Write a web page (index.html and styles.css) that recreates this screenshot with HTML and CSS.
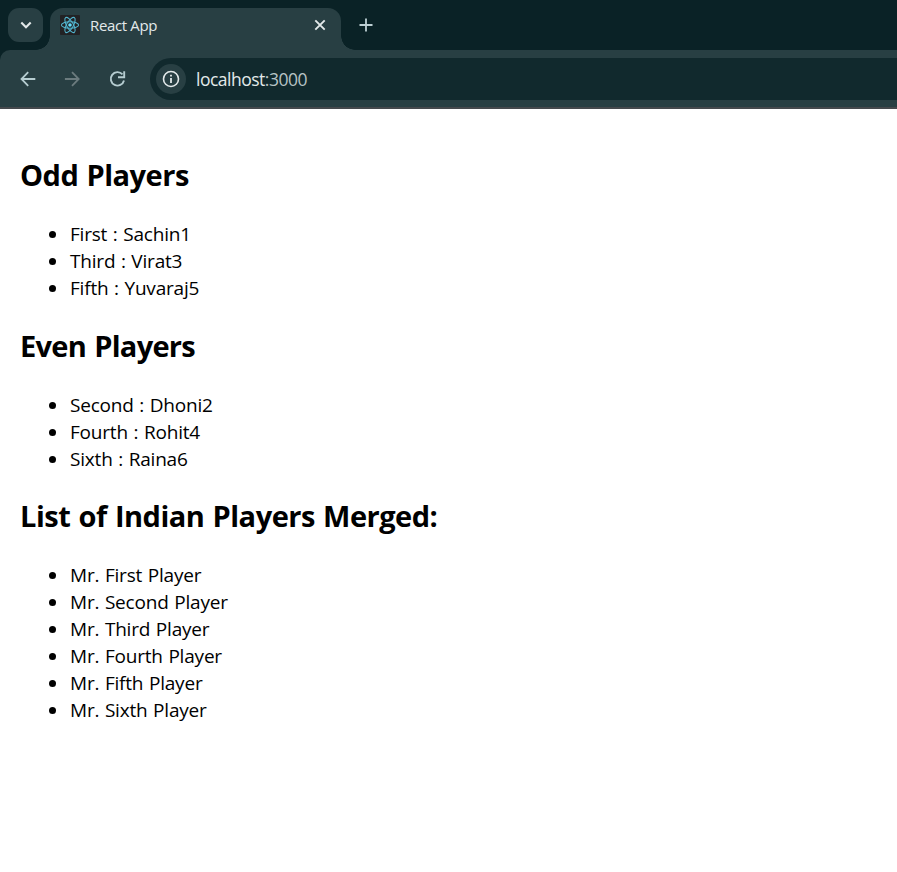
FILE: index.html
```html
<!DOCTYPE html>
<html lang="en">
<head>
<meta charset="utf-8">
<title>React App</title>
<link rel="stylesheet" href="styles.css">
</head>
<body>
<header class="browser">
  <div class="tab-strip">
    <button class="tab-search" aria-label="Search tabs"><svg width="35" height="34" viewBox="0 0 35 34"><path d="M13.3 14.5l4.7 4.7 4.7-4.7" fill="none" stroke="#e3e9ea" stroke-width="2.1"/></svg></button>
    <div class="tab">
      <svg class="favicon" width="20" height="20" viewBox="0 0 20 20"><rect width="20" height="20" rx="1" fill="#222224"/><g fill="none" stroke="#52b5cf" stroke-width="1.05"><ellipse cx="10" cy="10" rx="8.6" ry="3.3"/><ellipse cx="10" cy="10" rx="8.6" ry="3.3" transform="rotate(60 10 10)"/><ellipse cx="10" cy="10" rx="8.6" ry="3.3" transform="rotate(120 10 10)"/></g><circle cx="10" cy="10" r="1.8" fill="#61dafb"/></svg>
      <span class="tab-title">React App</span>
      <svg class="close" width="12" height="12" viewBox="0 0 12 12"><path d="M1.3 1.3l9.4 9.4M10.7 1.3l-9.4 9.4" stroke="#e3e9ea" stroke-width="1.9"/></svg>
    </div>
    <svg class="new-tab" width="14" height="14" viewBox="0 0 14 14"><path d="M7 .5v13M.5 7h13" stroke="#bdd0d4" stroke-width="1.8"/></svg>
  </div>
  <div class="toolbar">
    <svg class="nav" width="20" height="20" viewBox="0 0 20 20"><path d="M17.3 10H3.8M10.2 3.1L3.5 10l6.7 6.9" fill="none" stroke="#b6cdd1" stroke-width="1.8"/></svg>
    <svg class="nav" width="20" height="20" viewBox="0 0 20 20"><path d="M1.9 10h13.5M9 3.1l6.7 6.9L9 16.900" fill="none" stroke="#6b7b7e" stroke-width="1.8"/></svg>
    <svg class="nav" width="20" height="20" viewBox="0 0 20 20"><path d="M14.5 5.400A6.700 6.700 0 1 0 16 11.500M16.200 2.300v5.900h-6.200" fill="none" stroke="#b6cdd1" stroke-width="1.9"/></svg>
    <div class="address">
      <span class="site-info"><svg width="18" height="18" viewBox="0 0 18 18"><circle cx="9" cy="9" r="7.5" fill="none" stroke="#e3e9ea" stroke-width="1.6"/><path d="M9 8v5M9 4.8v1.8" stroke="#e3e9ea" stroke-width="1.8"/></svg></span>
      <span class="url">localhost<span class="port">:3000</span></span>
    </div>
  </div>
</header>
<main class="page">
  <h2>Odd Players</h2>
  <ul>
    <li>First : Sachin1</li>
    <li>Third : Virat3</li>
    <li>Fifth : Yuvaraj5</li>
  </ul>
  <h2 class="even-title">Even Players</h2>
  <ul class="even">
    <li>Second : Dhoni2</li>
    <li>Fourth : Rohit4</li>
    <li>Sixth : Raina6</li>
  </ul>
  <h2>List of Indian Players Merged:</h2>
  <ul>
    <li>Mr. First Player</li>
    <li>Mr. Second Player</li>
    <li>Mr. Third Player</li>
    <li>Mr. Fourth Player</li>
    <li>Mr. Fifth Player</li>
    <li>Mr. Sixth Player</li>
  </ul>
</main>
</body>
</html>
```
FILE: styles.css
```css
* { box-sizing: border-box; }
body {
  margin: 0;
  background: #fff;
  color: #000;
  font-family: "Segoe UI", "Open Sans", "Noto Sans", sans-serif;
  overflow: hidden;
}
svg { display: block; flex: none; }
.browser { background: #0a2226; height: 109px; }
.tab-strip { height: 50px; display: flex; align-items: flex-start; padding: 8px 0 0 8px; }
.tab-search { width: 35px; height: 34px; padding: 0; border: 0; border-radius: 11px; background: #283f43; }
.tab {
  position: relative;
  width: 291px;
  height: 42px;
  margin-left: 7px;
  padding: 0 15px 8px 10px;
  display: flex;
  align-items: center;
  border-radius: 13px 13px 0 0;
  background: #283f43;
}
.tab::before, .tab::after {
  content: "";
  position: absolute;
  bottom: 0;
  width: 14px;
  height: 14px;
}
.tab::before { left: -14px; background: radial-gradient(circle at 0 0, transparent 13.5px, #283f43 14px); }
.tab::after { right: -14px; background: radial-gradient(circle at 100% 0, transparent 13.5px, #283f43 14px); }
.tab-title { flex: 1; margin-left: 10px; font-size: 15px; line-height: 20px; letter-spacing: -.35px; color: #e3e9ea; }
.new-tab { margin: 10px 0 0 18px; }
.toolbar {
  height: 59px;
  display: flex;
  align-items: center;
  padding: 1px 0 0 18px;
  border-bottom: 2px solid #45494d;
  border-radius: 10px 0 0 0;
  background: #283f43;
}
.nav { margin-right: 25px; }
.address {
  flex: 1;
  height: 42px;
  margin-left: -3px;
  padding-left: 6px;
  display: flex;
  align-items: center;
  border-radius: 21px 0 0 21px;
  background: #11292d;
}
.site-info { width: 30px; height: 30px; display: grid; place-items: center; border-radius: 50%; background: #283f43; }
.url { margin-left: 10px; font-size: 17.5px; letter-spacing: -.5px; color: #e3e9ea; }
.port { color: #b7c3c5; }
.page { padding: 46px 20px 0; }
h2 { margin: 0; font-size: 29px; line-height: 40px; letter-spacing: -.5px; word-spacing: 1.2px; }
.even-title { letter-spacing: -.7px; }
ul { margin: 25px 0; padding-left: 50px; font-size: 19px; line-height: 27px; letter-spacing: -.2px; word-spacing: .9px; }
li { height: 27px; }
.even { margin-bottom: 24px; }
li::marker { font-size: 21px; }
```
